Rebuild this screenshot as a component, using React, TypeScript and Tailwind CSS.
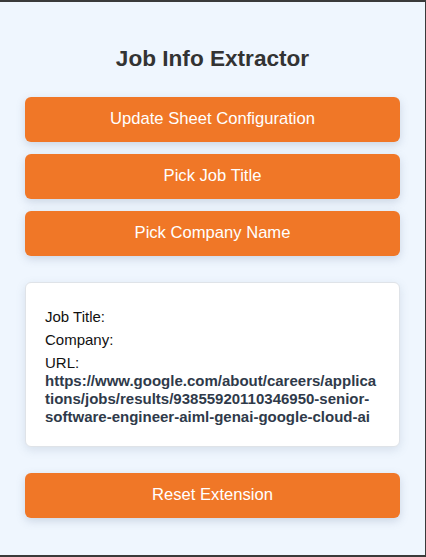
const buttonClass =
  'w-full h-[45px] rounded-md bg-[#f07727] text-white text-[16.6px] leading-[20px] pb-px shadow-[0_3px_8px_rgba(100,120,150,0.25)]'

export default function App() {
  const url =
    'https://www.google.com/about/careers/applications/jobs/results/93855920110346950-senior-software-engineer-aiml-genai-google-cloud-ai'

  return (
    <div
      className="h-[557px] w-[426px] box-border border-t-2 border-r border-b-2 border-[#3a3a3a] bg-[#eff6fe] px-[25px] pt-[44px]"
      style={{ fontFamily: '"Liberation Sans", Arial, sans-serif' }}
    >
      <h1 className="text-center text-[22.6px] leading-[26px] font-bold text-[#333]">Job Info Extractor</h1>

      <div className="mt-[25px] flex flex-col gap-3">
        <button className={buttonClass}>Update Sheet Configuration</button>
        <button className={buttonClass}>Pick Job Title</button>
        <button className={buttonClass}>Pick Company Name</button>
      </div>

      {/* extracted info */}
      <div className="mt-[26px] rounded-md border border-[#dfe3e8] bg-white pl-[19px] pr-[18px] pt-[25px] pb-[20px] text-[15px] leading-[18px] text-[#111] shadow-[0_3px_10px_rgba(100,120,150,0.18)]">
        <p className="mb-[5px]">Job Title:</p>
        <p className="mb-[5px]">Company:</p>
        <p>
          URL:
          <span className="block font-bold text-[#2f3a4a] break-words">{url}</span>
        </p>
      </div>

      <button className={`${buttonClass} mt-[26px]`}>Reset Extension</button>
    </div>
  )
}
